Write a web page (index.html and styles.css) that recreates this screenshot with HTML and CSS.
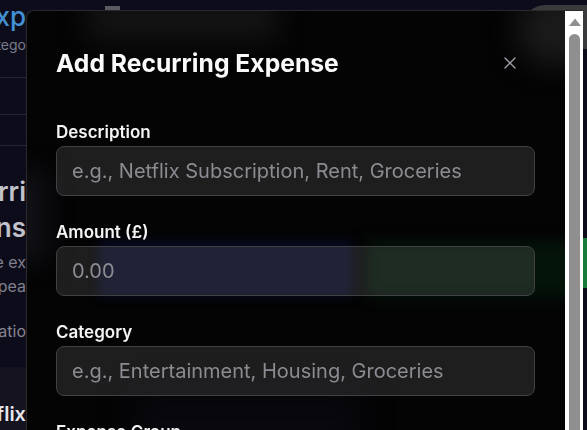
FILE: index.html
```html
<!DOCTYPE html>
<html lang="en">
<head>
<meta charset="utf-8">
<title>Add Recurring Expense</title>
<link rel="stylesheet" href="styles.css">
</head>
<body>
<div class="page">
  <aside class="strip">
    <div class="s-line s-brand"><span>Exp</span></div>
    <div class="s-line s-sub"><span>Catego</span></div>
    <div class="s-rule r1"></div>
    <div class="s-rule r2"></div>
    <div class="s-rule r3"></div>
    <div class="s-line s-heading first"><span>Recurri</span></div>
    <div class="s-line s-heading"><span>Expens</span></div>
    <div class="s-line s-desc first"><span>Manage the ex</span></div>
    <div class="s-line s-desc"><span>repea</span></div>
    <div class="s-line s-note"><span>notificatio</span></div>
    <div class="s-row">
      <div class="s-line s-item"><span>Netflix</span></div>
    </div>
  </aside>
  <main class="main">
    <div class="topbar">
      <span class="mark"></span>
      <span class="pill"></span>
    </div>
    <div class="green-btn"></div>
  </main>
</div>

<div class="modal" role="dialog" aria-labelledby="modal-title">
  <div class="modal-body">
    <div class="glow glow-top"></div>
    <div class="glow glow-pill"></div>
    <div class="glow glow-left"></div>
    <div class="glow glow-blue"></div>
    <div class="glow glow-green"></div>
    <div class="glow glow-navy"></div>

    <div class="modal-inner">
      <div class="modal-head">
        <h2 id="modal-title">Add Recurring Expense</h2>
        <button class="close" type="button" aria-label="Close">
          <svg width="12" height="12" viewBox="0 0 12 12" fill="none" stroke="#a1a1aa" stroke-width="1.4" stroke-linecap="round"><path d="M1 1L11 11M11 1L1 11"/></svg>
        </button>
      </div>
      <form class="form">
        <div class="field">
          <label for="desc">Description</label>
          <input id="desc" class="input" type="text" placeholder="e.g., Netflix Subscription, Rent, Groceries">
        </div>
        <div class="field">
          <label for="amount">Amount (£)</label>
          <input id="amount" class="input" type="text" placeholder="0.00">
        </div>
        <div class="field">
          <label for="cat">Category</label>
          <input id="cat" class="input" type="text" placeholder="e.g., Entertainment, Housing, Groceries">
        </div>
        <div class="field">
          <label for="group">Expense Group</label>
          <input id="group" class="input" type="text" placeholder="Select a group">
        </div>
        <div class="field">
          <label for="freq">Frequency</label>
          <input id="freq" class="input" type="text" placeholder="Monthly">
        </div>
      </form>
    </div>
  </div>
  <div class="scrollbar" aria-hidden="true">
    <div class="sb-up">
      <svg width="18" height="22" viewBox="0 0 18 22"><path d="M4 15L10 7.5L16 15Z" fill="#8f8f8f"/></svg>
    </div>
    <div class="sb-thumb"></div>
  </div>
</div>
</body>
</html>
```
FILE: styles.css
```css
* { box-sizing: border-box; }

html, body {
  margin: 0;
  height: 100%;
  overflow: hidden;
}

body {
  background: #0d0c1a;
  font-family: Inter, "Noto Sans", "DejaVu Sans", sans-serif;
  color: #fafafa;
}

/* ---------- background page ---------- */
.page {
  display: flex;
  height: 100vh;
}

.strip {
  width: 26px;
  flex: none;
  overflow: hidden;
  display: flex;
  flex-direction: column;
}

.s-line {
  display: flex;
  justify-content: flex-end;
  white-space: nowrap;
}
.s-line span { flex: none; }

.s-brand {
  padding-top: 2px;
  font-size: 26px;
  line-height: 30px;
  font-weight: 500;
  color: #4390d4;
}
.s-sub {
  margin-top: 3px;
  font-size: 14px;
  line-height: 20px;
  color: #7c7c8c;
}
.s-rule {
  height: 1px;
  flex: none;
  background: #25243a;
}
.r1 { margin-top: 22px; }
.r2 { margin-top: 36px; }
.r3 { margin-top: 30px; }

.s-heading {
  font-size: 26px;
  line-height: 36px;
  font-weight: 600;
  color: #c2c2ca;
}
.s-heading.first { margin-top: 28px; }

.s-desc {
  font-size: 16px;
  line-height: 24px;
  color: #80808c;
}
.s-desc.first { margin-top: 4px; }

.s-note {
  margin-top: 21px;
  font-size: 16px;
  line-height: 24px;
  color: #85858f;
}

.s-row {
  margin-top: 24px;
  flex: 1;
  background: #14131f;
  padding-top: 33px;
}
.s-item {
  font-size: 20px;
  line-height: 28px;
  font-weight: 600;
  color: #e6e6ec;
}

.main {
  flex: 1;
  display: flex;
  flex-direction: column;
  min-width: 0;
}
.topbar {
  display: flex;
  align-items: flex-start;
  justify-content: space-between;
  padding-top: 5px;
}
.mark {
  margin-left: 79px;
  margin-top: 1px;
  width: 15px;
  height: 8px;
  background: #5a5a60;
}
.pill {
  width: 94px;
  height: 44px;
  border-radius: 22px;
  background: #3a3a3c;
  margin-right: -30px;
}
.green-btn {
  align-self: flex-end;
  margin-top: 189px;
  margin-right: -30px;
  width: 220px;
  height: 50px;
  border-radius: 8px;
  background: #177a3a;
}

/* ---------- modal ---------- */
.modal {
  position: fixed;
  left: 26px;
  top: 10px;
  width: 557px;
  height: 760px;
  display: flex;
  border: 1px solid #2a2a2d;
  border-right: 0;
  border-radius: 8px 0 0 0;
  background: #040405;
  overflow: hidden;
}

.modal-body {
  position: relative;
  flex: 1;
  min-width: 0;
  overflow: hidden;
}

.scrollbar {
  width: 18px;
  flex: none;
  display: flex;
  flex-direction: column;
  background: #ffffff;
}
.sb-up {
  height: 22px;
  flex: none;
}
.sb-up svg { display: block; }
.sb-thumb {
  flex: 1;
  margin: 1px 3px 0 4px;
  border-radius: 6px;
  background: #8f8f8f;
}

.glow {
  position: absolute;
  z-index: 0;
  pointer-events: none;
}
.glow-top {
  left: 60px; top: -14px; width: 190px; height: 44px;
  background: #131313;
  filter: blur(12px);
}
.glow-pill {
  left: 490px; top: -16px; width: 110px; height: 70px;
  border-radius: 40px;
  background: #1a1a1a;
  filter: blur(14px);
}
.glow-left {
  left: -20px; top: 160px; width: 40px; height: 90px;
  background: #111116;
  filter: blur(12px);
}
.glow-blue {
  left: 72px; top: 230px; width: 254px; height: 56px;
  background: #060a20;
  filter: blur(5px);
}
.glow-green {
  left: 340px; top: 230px; width: 260px; height: 56px;
  background: #041408;
  filter: blur(7px);
}
.glow-navy {
  left: 110px; top: 385px; width: 220px; height: 60px;
  background: #08080f;
  filter: blur(16px);
}

.modal-inner {
  position: relative;
  z-index: 1;
  padding: 36px 30px 40px 29px;
}

.modal-head {
  display: flex;
  align-items: center;
  justify-content: space-between;
  margin-bottom: 41px;
}
.modal-head h2 {
  margin: 0;
  font-size: 24.7px;
  line-height: 32px;
  font-weight: 700;
  color: #fafafa;
}
.close {
  width: 24px;
  height: 24px;
  margin-right: 13px;
  padding: 0;
  border: 0;
  background: none;
  display: flex;
  align-items: center;
  justify-content: center;
}

.form { display: flex; flex-direction: column; }

.field { margin-bottom: 24px; }
.field label {
  display: block;
  margin-bottom: 2px;
  font-size: 17px;
  line-height: 24px;
  font-weight: 600;
  color: #f4f4f5;
}
.input {
  display: block;
  width: 100%;
  height: 50px;
  padding: 0 15px;
  font-family: inherit;
  font-size: 20px;
  color: #fafafa;
  background: rgba(255, 255, 255, 0.105);
  border: 1px solid #414144;
  border-radius: 8px;
  outline: none;
}
.input::placeholder { color: #8b8b91; }
```
